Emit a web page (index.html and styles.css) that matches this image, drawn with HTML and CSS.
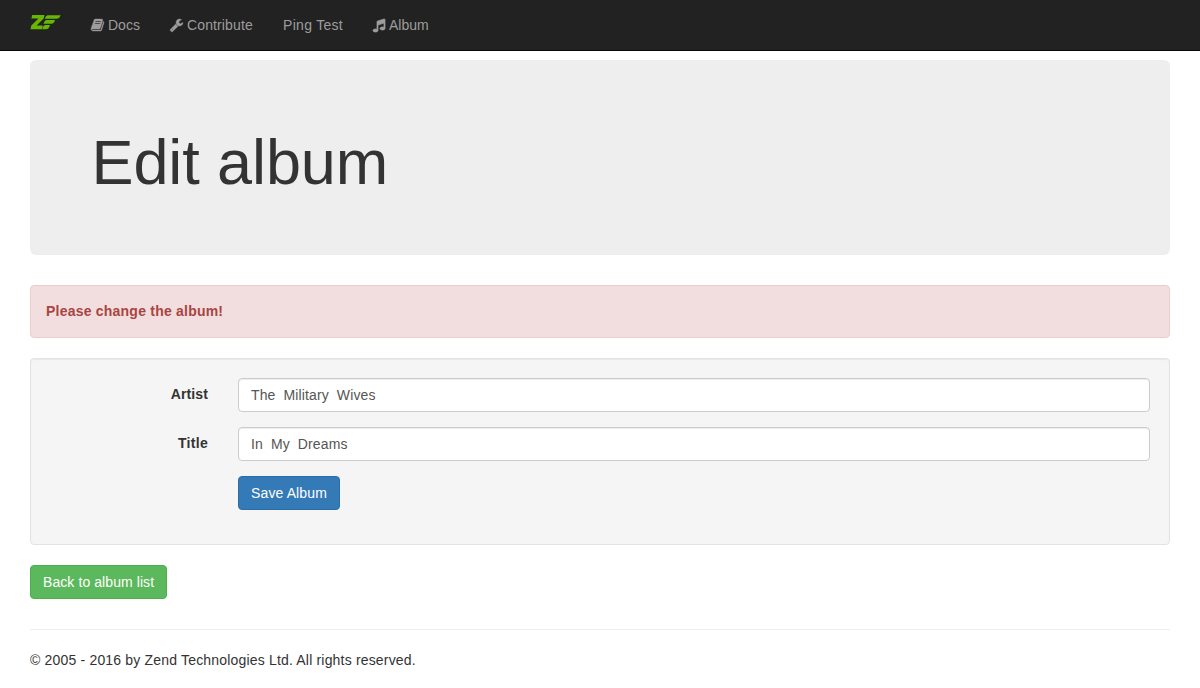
FILE: index.html
```html
<!DOCTYPE html>
<html lang="en">
<head>
<meta charset="utf-8">
<title>Edit album</title>
<link rel="stylesheet" href="styles.css">
</head>
<body>
<nav class="navbar">
  <a class="brand" href="#" aria-label="Zend Framework">
    <svg width="32" height="16" viewBox="0 0 32 16"><path d="M2.200 1H14.500L13.700 4.500L6.600 11.400H12.800L12 15.300H.5L1.300 11.600L8.500 4.600H1.400ZM17.500 1.200H30.700Q29.300 4.800 26.500 4.800H14.800Q15.300 1.900 17.500 1.200ZM16 6H25Q24 9.800 21.500 9.800H13.500Q14 6.900 16 6ZM14.700 10.900H20Q19 15 16 15.300H12.400Q12.700 11.900 14.700 10.900Z"/></svg>
  </a>
  <a class="nav-link docs" href="#"><svg class="icon" viewBox="0 0 1664 1792"><path d="M1639 478q40 57 18 129l-275 906q-19 64-76.500 107.500t-122.500 43.500h-923q-77 0-148.500-53.500t-99.500-131.500q-24-67-2-127 0-4 3-27t4-37q1-8-3-21.500t-3-19.500q2-11 8-21t16.500-23.500 16.500-23.500q23-38 45-91.500t30-91.500q3-10 .5-30t-.5-28q3-11 17-28t17-23q21-36 42-92t25-90q1-9-2.500-32t.5-28q4-13 22-30.500t22-22.500q19-26 42.500-84.500t27.500-96.500q1-8-3-25.500t-2-26.500q2-8 9-18t18-23 17-21q8-12 16.500-30.500t15-35 16-36 19.500-32 26.500-23.500 36-11.500 47.500 5.500l-1 3q38-9 51-9h761q74 0 114 56t18 130l-274 906q-36 119-71.500 153.500t-128.500 34.500h-869q-27 0-38 15-11 16-1 43 24 70 144 70h923q29 0 56-15.500t35-41.500l300-987q7-22 5-57 38 15 59 43zm-1064 2q-4 13 2 22.500t20 9.500h608q13 0 25.500-9.500t16.500-22.500l21-64q4-13-2-22.500t-20-9.500h-608q-13 0-25.500 9.500t-16.500 22.500zm-83 256q-4 13 2 22.500t20 9.500h608q13 0 25.500-9.500t16.500-22.500l21-64q4-13-2-22.500t-20-9.500h-608q-13 0-25.500 9.500t-16.500 22.500z"/></svg><span>Docs</span></a>
  <a class="nav-link contribute" href="#"><svg class="icon" viewBox="64 0 1664 1792"><path d="M448 1472q0-26-19-45t-45-19-45 19-19 45 19 45 45 19 45-19 19-45zm644-420l-682 682q-37 37-90 37-52 0-91-37l-106-108q-38-36-38-90 0-53 38-91l681-681q39 98 114.500 173.500t173.500 114.500zm634-435q0 39-23 106-47 134-164.500 217.500t-258.500 83.500q-185 0-316.500-131.500t-131.500-316.500 131.500-316.500 316.500-131.500q58 0 121.500 16.500t107.500 46.500q16 11 16 28t-16 28l-293 169v224l193 107q5-3 79-48.500t135.500-81 70.500-35.500q15 0 23.500 10t8.500 25z"/></svg><span>Contribute</span></a>
  <a class="nav-link ping" href="#"><span>Ping Test</span></a>
  <a class="nav-link album" href="#"><svg class="icon music" viewBox="128 0 1536 1792"><path d="M1664 224v1120q0 50-34 89t-86 60.500-103.500 32-96.500 10.500-96.500-10.500-103.500-32-86-60.500-34-89 34-89 86-60.500 103.500-32 96.500-10.500q105 0 192 39v-537l-768 237v709q0 50-34 89t-86 60.500-103.500 32-96.500 10.500-96.500-10.500-103.500-32-86-60.500-34-89 34-89 86-60.500 103.500-32 96.500-10.500q105 0 192 39v-967q0-31 19-56.500t49-35.500l832-256q12-4 28-4 40 0 68 28t28 68z"/></svg><span>Album</span></a>
</nav>
<main class="container">
  <header class="jumbotron"><h1>Edit album</h1></header>
  <div class="alert"><strong>Please change the album!</strong></div>
  <form class="well">
    <label class="artist-label" for="artist">Artist</label>
    <input id="artist" type="text" value="The  Military  Wives">
    <label class="title-label" for="title">Title</label>
    <input id="title" type="text" value="In  My  Dreams">
    <button class="btn primary" type="button">Save Album</button>
  </form>
  <a class="btn success" href="#">Back to album list</a>
  <footer><p>© 2005 - 2016 by Zend Technologies Ltd. All rights reserved.</p></footer>
</main>
</body>
</html>
```
FILE: styles.css
```css
* { box-sizing: border-box; }
body {
  margin: 0;
  background: #fff;
  color: #333;
  font: 14px/20px "Liberation Sans", Arial, sans-serif;
}
a { text-decoration: none; }
.navbar {
  display: flex;
  height: 51px;
  padding-left: 15px;
  background: #222;
  border-bottom: 1px solid #080808;
}
.brand { width: 61px; padding: 14px 15px; }
.brand svg { display: block; fill: #68b604; }
.nav-link {
  display: flex;
  padding: 15px;
  color: #9d9d9d;
  white-space: nowrap;
}
.icon {
  flex: none;
  width: 13px;
  height: 14px;
  margin: 3px 4px 0 0;
  overflow: visible;
  fill: currentColor;
  stroke: currentColor;
  stroke-width: 50;
}
.music { width: 12px; stroke-width: 90; }
.docs { width: 79px; }
.contribute { width: 113px; letter-spacing: .12px; }
.ping { width: 90px; letter-spacing: .3px; }
.container { padding: 9px 30px 0; }
.jumbotron {
  height: 195px;
  margin-bottom: 30px;
  padding: 68px 61.5px 0;
  border-radius: 6px;
  background: #eee;
}
h1 {
  margin: 0;
  font-size: 63px;
  font-weight: 500;
  line-height: 69px;
  letter-spacing: -.1px;
}
.alert {
  height: 53px;
  margin-bottom: 20px;
  padding: 15px;
  border: 1px solid #ebccd1;
  border-radius: 4px;
  background: #f2dede;
  color: #a94442;
  letter-spacing: .22px;
}
.well {
  display: grid;
  grid-template-columns: 177px 912px;
  grid-auto-rows: 34px;
  gap: 15px 30px;
  height: 187px;
  margin-bottom: 20px;
  padding: 19px 0 0;
  border: 1px solid #e3e3e3;
  border-radius: 4px;
  background: #f5f5f5;
  box-shadow: inset 0 1px 1px rgba(0, 0, 0, .05);
}
label { padding-top: 6px; font-weight: 700; text-align: right; }
.artist-label { letter-spacing: .1px; }
.title-label { letter-spacing: .3px; }
input {
  height: 34px;
  padding: 6px 12px;
  border: 1px solid #ccc;
  border-radius: 4px;
  background: #fff;
  box-shadow: inset 0 1px 1px rgba(0, 0, 0, .075);
  color: #555;
  font: inherit;
  letter-spacing: .12px;
}
.btn {
  display: block;
  height: 34px;
  padding: 6px 12px;
  border: 1px solid;
  border-radius: 4px;
  color: #fff;
  font: inherit;
  white-space: nowrap;
}
.primary {
  grid-column: 2;
  width: 102px;
  background: #337ab7;
  border-color: #2e6da4;
  letter-spacing: .12px;
}
.success {
  width: 137px;
  background: #5cb85c;
  border-color: #4cae4c;
  letter-spacing: .08px;
}
footer { margin-top: 30px; padding-top: 20px; border-top: 1px solid #eee; }
footer p { margin: 0; letter-spacing: .18px; }
```
